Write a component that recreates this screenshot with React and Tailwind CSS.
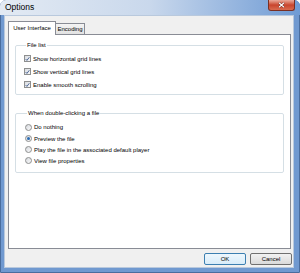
import React from "react";

function CheckBox({ label }) {
  return (
    <div className="flex h-[13px] items-center">
      <span className="flex h-[7px] w-[7px] items-center justify-center border border-[#8e8f8f] bg-gradient-to-br from-[#d8dbe0] to-[#f9f9f9]">
        <svg width="6" height="6" viewBox="0 0 6 6">
          <path d="M0.8 3.1 L2.3 4.7 L5.2 0.9" fill="none" stroke="#3c5a8c" strokeWidth="1.1" />
        </svg>
      </span>
      <span className="ml-[2px]">{label}</span>
    </div>
  );
}

function Radio({ label, checked, tall }) {
  return (
    <div className={`flex items-center ${tall ? "h-[12px]" : "h-[11px]"}`}>
      <span className="flex h-[7px] w-[7px] items-center justify-center rounded-full border border-[#8e8f8f] bg-gradient-to-br from-[#d6d9de] to-[#fbfbfb]">
        {checked && <span className="h-[3px] w-[3px] rounded-full bg-[#2a6bb3]" />}
      </span>
      <span className="ml-[2px]">{label}</span>
    </div>
  );
}

export default function App() {
  return (
    <div
      className="flex h-[273px] w-[300px] flex-col rounded-t-[6px] border border-[#4a6d9e] bg-[#7099d0] text-[6px] leading-[8px] text-black"
      style={{ fontFamily: '"Liberation Sans", Arial, sans-serif' }}
    >
      {/* title bar */}
      <div className="relative -mx-px -mt-px h-[15px] shrink-0 rounded-t-[6px] bg-gradient-to-r from-[#e3eaf3] via-[#c9d8ec] to-[#6f9bd4]">
        <div className="pl-[5px] pt-[2px] text-[8.5px] leading-[11px]">Options</div>
        <div className="absolute right-[5px] top-0 flex h-[11px] w-[27px] items-center justify-center rounded-b-[3px] border border-t-0 border-[#7a2f22] bg-gradient-to-b from-[#e9a99a] via-[#c8442c] to-[#d96b4f]">
          <svg width="7" height="6" viewBox="0 0 7 6">
            <path d="M1 0.8 L6 5.2 M6 0.8 L1 5.2" stroke="#5a1a10" strokeWidth="2" />
            <path d="M1 0.8 L6 5.2 M6 0.8 L1 5.2" stroke="#ffffff" strokeWidth="1.2" />
          </svg>
        </div>
      </div>

      {/* client area */}
      <div className="mb-[4px] ml-[3px] mr-[5px] flex h-[254px] flex-col border border-[#b9c9dd] bg-[#f0f0f0] pt-[5px]">
        {/* tabs */}
        <div className="ml-[3px] flex h-[13px] items-end">
          <div className="relative z-10 -mb-px flex h-[14px] w-[48px] items-start justify-center border border-b-0 border-[#898c95] bg-white pt-[2px]">
            User Interface
          </div>
          <div className="flex h-[11px] w-[29px] items-center justify-center border border-b-0 border-l-0 border-[#898c95] bg-gradient-to-b from-[#f4f4f4] to-[#e2e2e2]">
            Encoding
          </div>
        </div>

        {/* panel */}
        <div className="ml-[3px] mr-[2px] h-[215px] border border-[#898c95] bg-white">
          <fieldset className="ml-[6px] mr-[6px] mt-[6px] rounded-[2px] border border-[#d5dfe5] pb-[3px] pl-[8px] pt-[3px]">
            <legend className="ml-[2px] px-[1px] leading-[8px]">File list</legend>
            <CheckBox label="Show horizontal grid lines" />
            <CheckBox label="Show vertical grid lines" />
            <CheckBox label="Enable smooth scrolling" />
          </fieldset>

          <fieldset className="ml-[6px] mr-[6px] mt-[14px] rounded-[2px] border border-[#d5dfe5] pb-[6px] pl-[9px] pt-[4px]">
            <legend className="ml-[2px] px-[1px] leading-[8px]">When double-clicking a file</legend>
            <Radio label="Do nothing" tall />
            <Radio label="Preview the file" checked />
            <Radio label="Play the file in the associated default player" />
            <Radio label="View file properties" />
          </fieldset>
        </div>

        {/* buttons */}
        <div className="mr-px mt-[4px] flex justify-end gap-[4px]">
          <button className="flex h-[12px] w-[42px] items-center justify-center rounded-[2px] border border-[#3c7fb1] bg-gradient-to-b from-[#eef7fd] to-[#d8ecf9]">
            OK
          </button>
          <button className="flex h-[12px] w-[42px] items-center justify-center rounded-[2px] border border-[#707070] bg-gradient-to-b from-[#f2f2f2] to-[#dadada]">
            Cancel
          </button>
        </div>
      </div>
    </div>
  );
}
